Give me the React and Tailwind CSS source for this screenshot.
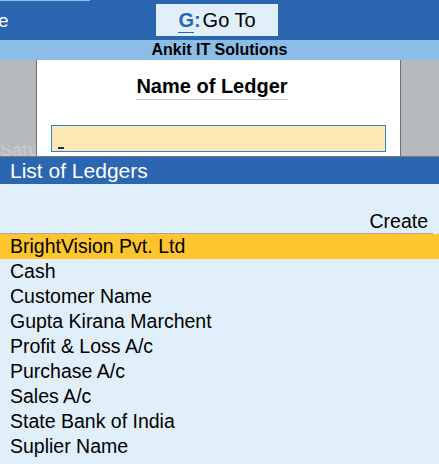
export default function App() {
  const ledgers = [
    "Cash",
    "Customer Name",
    "Gupta Kirana Marchent",
    "Profit & Loss A/c",
    "Purchase A/c",
    "Sales A/c",
    "State Bank of India",
    "Suplier Name",
  ];

  return (
    <div className="w-[439px] h-[464px] overflow-hidden bg-[#e1effa] font-['Liberation_Sans',Arial,sans-serif] text-black">
      {/* Top bar */}
      <div className="relative h-[40px] bg-[#2a67b0] flex items-center">
        <div className="absolute left-0 top-0 h-px w-[90px] bg-[#8bbde6]" />
        <div className="w-[8px] overflow-hidden">
          <span className="block -ml-[2px] text-[19px] text-white leading-none">e</span>
        </div>
        <div className="ml-[148px] h-[32px] w-[122px] bg-[#e1effa] flex items-center justify-center text-[20px] leading-none">
          <span className="text-[#2a67b0] font-bold border-b border-[#2a67b0] pb-[2px] -mb-[3px]">G</span>
          <span className="text-[#2a67b0] font-bold mr-[2px]">:</span>
          <span>Go To</span>
        </div>
      </div>

      {/* Company */}
      <div className="h-[20px] bg-[#8bbde6] flex items-center justify-center text-[16px] font-bold leading-none">
        Ankit IT Solutions
      </div>

      {/* Ledger name panel */}
      <div className="h-[97px] bg-[#b6b9bc] border-b border-[#7a7a7a] flex overflow-hidden">
        <div className="w-[36px] flex flex-col justify-end overflow-hidden">
          <span className="block h-[11px] text-[18px] font-bold text-[#c6c9cc] leading-[11px] overflow-hidden">Satur</span>
        </div>
        <div className="w-[365px] bg-white border-x border-[#707070] flex flex-col items-center">
          <div className="mt-[14px] mr-[13px] text-[20px] font-bold leading-[24px] border-b border-[#c8c8c8] pb-[1px]">
            Name of Ledger
          </div>
          <div className="mt-[25px] w-[335px] h-[27px] bg-[#fee7b4] border border-[#2589c8] flex items-end px-[6px] pb-[2px]">
            <div className="w-[6px] h-[2px] bg-[#1a2a6a]" />
          </div>
        </div>
      </div>

      {/* List */}
      <div className="h-[27px] bg-[#2a67b0] text-white text-[21px] leading-[27px] pl-[10px]">
        List of Ledgers
      </div>
      <div className="pt-[25px]">
        <div className="w-[433px] h-[25px] border-b border-[#a8a8a8] text-right pr-[5px] text-[19.5px] leading-[24px]">
          Create
        </div>
        <div className="h-[25px] bg-[#fec52e] pl-[10px] text-[19.5px] leading-[25px]">
          BrightVision Pvt. Ltd
        </div>
        {ledgers.map((name) => (
          <div key={name} className="h-[25px] pl-[10px] text-[19.5px] leading-[25px]">
            {name}
          </div>
        ))}
      </div>
    </div>
  );
}
